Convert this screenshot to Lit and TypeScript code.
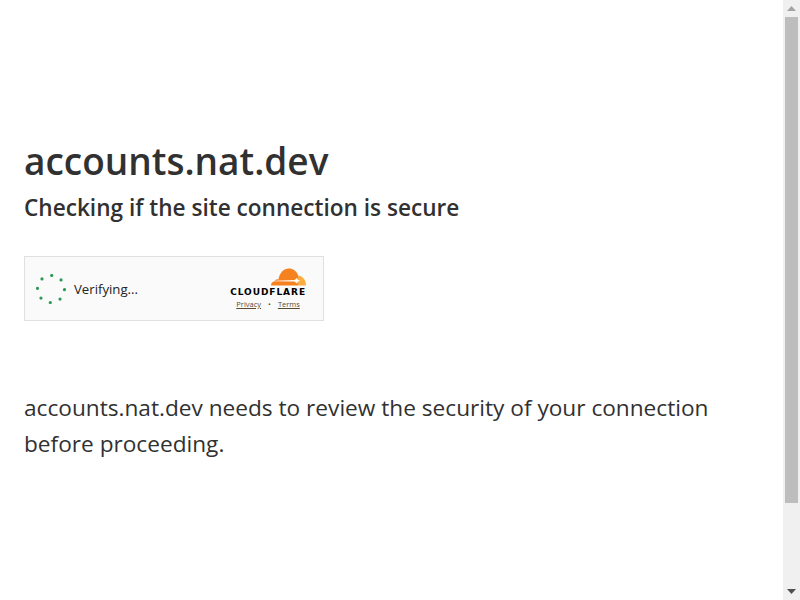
import { LitElement, css, html, svg } from 'lit'
import { customElement } from 'lit/decorators.js'

const DOTS = [0, 1, 2, 3, 4, 5, 6, 7]

@customElement('app-root')
export class AppRoot extends LitElement {
  static styles = css`
    :host {
      display: block;
      height: 600px;
      overflow: hidden;
      background: #fff;
      font-family: 'Open Sans', 'Noto Sans', sans-serif;
      color: #313131;
    }
    .page {
      display: flex;
      height: 600px;
    }
    .main {
      flex: 1;
      padding: 137px 24px 0;
    }
    h1 {
      margin: 0;
      font-size: 37px;
      line-height: 48px;
      font-weight: 600;
    }
    h2 {
      margin: 0;
      padding-top: 5px;
      font-size: 22.6px;
      line-height: 36px;
      font-weight: 600;
    }
    .widget {
      display: flex;
      justify-content: space-between;
      box-sizing: border-box;
      width: 300px;
      height: 65px;
      margin-top: 30px;
      padding: 0 17px 0 11px;
      background: #fafafa;
      border: 1px solid #e0e0e0;
    }
    .status {
      display: flex;
      align-items: center;
      gap: 8px;
      font-size: 13.2px;
      color: #232323;
    }
    .brand {
      display: flex;
      flex-direction: column;
      align-items: center;
      padding-top: 11px;
    }
    .logo {
      align-self: flex-end;
      display: block;
    }
    .wordmark {
      font-family: 'DejaVu Sans', sans-serif;
      font-size: 9px;
      line-height: 9px;
      font-weight: 700;
      letter-spacing: 0.95px;
      margin-top: 2px;
      color: #000;
    }
    .links {
      display: flex;
      gap: 7px;
      margin-top: 2px;
      font-size: 7.5px;
      line-height: 11px;
      color: #5a4a32;
    }
    .links .link {
      text-decoration: underline;
    }
    p {
      margin: 69px 0 0;
      font-size: 22.65px;
      line-height: 36px;
    }
    .scrollbar {
      display: flex;
      flex-direction: column;
      align-items: center;
      width: 17px;
      background: #f0f0f0;
    }
    .arrow {
      display: flex;
      align-items: center;
      justify-content: center;
      height: 17px;
    }
    .thumb {
      width: 13px;
      height: 486px;
      background: #bdbdbd;
    }
    .track {
      flex: 1;
    }
  `

  render() {
    return html`
      <div class="page">
        <div class="main">
          <h1>accounts.nat.dev</h1>
          <h2>Checking if the site connection is secure</h2>
          <div class="widget">
            <div class="status">
              <svg width="30" height="30" viewBox="0 0 30 30">
                ${DOTS.map(i => {
                  const a = ((i * 45 + 3 - 90) * Math.PI) / 180
                  return svg`<circle
                    cx=${15 + 13.5 * Math.cos(a)}
                    cy=${15 + 13.5 * Math.sin(a)}
                    r="1.6"
                    fill="#2c9a55"
                  ></circle>`
                })}
              </svg>
              <span>Verifying...</span>
            </div>
            <div class="brand">
              <svg class="logo" width="38" height="18" viewBox="0 0 38 18">
                <path d="M29 7.5C34 7 38 11.5 38 17.5L29.5 17.5Z" fill="#fbad41"></path>
                <path d="M3 17.5C3 15 4.5 13.5 6.5 13.5 7 12 8.5 11 10.5 11.5 11.5 5 15.5 .5 21 .5 25 .5 28.5 3 30 7L30 17.5Z" fill="#f6821f"></path>
                <path d="M7 12.7 26.5 12 29 10 30 12 32.5 12.7 30 13.4 29 15.5 26.5 13.4 7 13.2Z" fill="#fff"></path>
              </svg>
              <div class="wordmark">CLOUDFLARE</div>
              <div class="links">
                <span class="link">Privacy</span><span>•</span><span class="link">Terms</span>
              </div>
            </div>
          </div>
          <p>accounts.nat.dev needs to review the security of your connection before proceeding.</p>
        </div>
        <div class="scrollbar">
          <div class="arrow">
            <svg width="9" height="5" viewBox="0 0 9 5"><path d="M0 5 4.5 0 9 5z" fill="#a3a3a3"></path></svg>
          </div>
          <div class="thumb"></div>
          <div class="track"></div>
          <div class="arrow">
            <svg width="9" height="5" viewBox="0 0 9 5"><path d="M0 0 4.5 5 9 0z" fill="#505050"></path></svg>
          </div>
        </div>
      </div>
    `
  }
}
